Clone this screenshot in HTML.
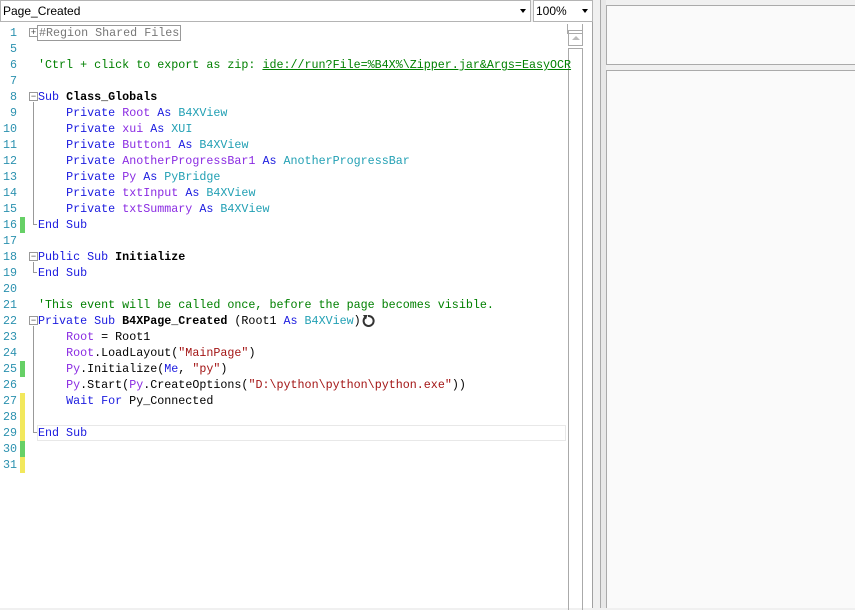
<!DOCTYPE html>
<html><head><meta charset="utf-8"><style>
*{margin:0;padding:0;box-sizing:border-box}
body{width:855px;height:608px;background:#f0f0f0;position:relative;overflow:hidden;font-family:"Liberation Sans",sans-serif}
.abs{position:absolute}
.combo{top:0;height:22px;background:#fff;border:1px solid #b4b4b4;font-size:12px;line-height:20px;padding-left:2px;color:#000}
.arrow{position:absolute;right:4px;top:8px;width:0;height:0;border-left:3px solid transparent;border-right:3px solid transparent;border-top:4px solid #000}
#ed{left:0;top:22px;width:593px;height:586px;background:#fff;border-right:1px solid #a0a0a0}
.row{position:absolute;left:0;height:16px;width:566px;font-family:"Liberation Mono",monospace;font-size:11.7px;line-height:16px;white-space:pre}
.ln{position:absolute;left:0;width:17px;text-align:right;color:#2b91af}
.code{position:absolute;left:38px}
.k{color:#1a1adf}.v{color:#8a2be2}.t{color:#22a0b4}.c{color:#008000}.s{color:#a31515}.b{font-weight:bold;color:#000}
.mk{position:absolute;left:20px;width:5px;height:16px}
.g{background:#66d066}.y{background:#f2e85c}
.fold{position:absolute;left:29px;top:3px;width:9px;height:9px;border:1px solid #999;background:#fff;font-size:9px;line-height:7px;text-align:center;color:#444;font-family:"Liberation Sans",sans-serif}
.vl{position:absolute;left:33px;width:1px;background:#999}
</style></head><body>
<div class="abs combo" style="left:0;width:531px">Page_Created<div class="arrow"></div></div>
<div class="abs combo" style="left:533px;width:60px">100%<div class="arrow"></div></div>
<div id="ed" class="abs">
 <div class="abs" style="left:567px;top:2px;width:16px;height:10px;border:1px solid #aaa;border-top:none"></div>
 <div class="abs" style="left:568px;top:8px;width:15px;height:16px;border:1px solid #aaa"><div style="position:absolute;left:3px;top:5px;border-left:4px solid transparent;border-right:4px solid transparent;border-bottom:4px solid #bbb"></div></div>
 <div class="abs" style="left:568px;top:26px;width:15px;height:562px;border:1px solid #aaa;border-bottom:none"></div>
</div>
<div class="abs" style="left:600px;top:0;width:6px;height:608px;background:#e8e8e8;border-left:1px solid #aaa"></div>
<div class="abs" style="left:606px;top:5px;width:249px;height:60px;background:#fafafa;border:1px solid #aaa;border-right:none"></div>
<div class="abs" style="left:606px;top:70px;width:249px;height:538px;background:#fafafa;border:1px solid #aaa;border-right:none;border-bottom:none"></div>

<div class="abs" style="left:0;top:25px;width:566px">
<div class="row" style="top:0"><span class="ln">1</span><div class="fold">+</div><span class="code" style="color:#777;border:1px solid #999;left:37px;padding:0 1px;line-height:14px">#Region Shared Files</span></div>
<div class="row" style="top:16px"><span class="ln">5</span></div>
<div class="row" style="top:32px"><span class="ln">6</span><span class="code c">'Ctrl + click to export as zip: <u>ide://run?File=%B4X%\Zipper.jar&amp;Args=EasyOCR</u></span></div>
<div class="row" style="top:48px"><span class="ln">7</span></div>
<div class="row" style="top:64px"><span class="ln">8</span><div class="fold">−</div><span class="code"><span class="k">Sub</span> <span class="b">Class_Globals</span></span></div>
<div class="row" style="top:80px"><span class="ln">9</span><span class="code">    <span class="k">Private</span> <span class="v">Root</span> <span class="k">As</span> <span class="t">B4XView</span></span></div>
<div class="row" style="top:96px"><span class="ln">10</span><span class="code">    <span class="k">Private</span> <span class="v">xui</span> <span class="k">As</span> <span class="t">XUI</span></span></div>
<div class="row" style="top:112px"><span class="ln">11</span><span class="code">    <span class="k">Private</span> <span class="v">Button1</span> <span class="k">As</span> <span class="t">B4XView</span></span></div>
<div class="row" style="top:128px"><span class="ln">12</span><span class="code">    <span class="k">Private</span> <span class="v">AnotherProgressBar1</span> <span class="k">As</span> <span class="t">AnotherProgressBar</span></span></div>
<div class="row" style="top:144px"><span class="ln">13</span><span class="code">    <span class="k">Private</span> <span class="v">Py</span> <span class="k">As</span> <span class="t">PyBridge</span></span></div>
<div class="row" style="top:160px"><span class="ln">14</span><span class="code">    <span class="k">Private</span> <span class="v">txtInput</span> <span class="k">As</span> <span class="t">B4XView</span></span></div>
<div class="row" style="top:176px"><span class="ln">15</span><span class="code">    <span class="k">Private</span> <span class="v">txtSummary</span> <span class="k">As</span> <span class="t">B4XView</span></span></div>
<div class="row" style="top:192px"><span class="ln">16</span><div class="mk g"></div><span class="code k">End Sub</span></div>
<div class="vl" style="top:77px;height:123px"></div><div class="abs" style="left:33px;top:199px;width:4px;height:1px;background:#999"></div>
<div class="row" style="top:208px"><span class="ln">17</span></div>
<div class="row" style="top:224px"><span class="ln">18</span><div class="fold">−</div><span class="code"><span class="k">Public Sub</span> <span class="b">Initialize</span></span></div>
<div class="row" style="top:240px"><span class="ln">19</span><span class="code k">End Sub</span></div>
<div class="vl" style="top:237px;height:11px"></div><div class="abs" style="left:33px;top:247px;width:4px;height:1px;background:#999"></div>
<div class="row" style="top:256px"><span class="ln">20</span></div>
<div class="row" style="top:272px"><span class="ln">21</span><span class="code c">'This event will be called once, before the page becomes visible.</span></div>
<div class="row" style="top:288px"><span class="ln">22</span><div class="fold">−</div><span class="code"><span class="k">Private Sub</span> <span class="b">B4XPage_Created</span> (Root1 <span class="k">As</span> <span class="t">B4XView</span>)</span>
<svg style="position:absolute;left:361px;top:1px" width="14" height="14" viewBox="0 0 14 14"><path d="M4 3.5 A5 5 0 1 0 7 2" fill="none" stroke="#333" stroke-width="2"/><path d="M2 1 L6.5 1 L5 5.5 Z" fill="#333"/></svg></div>
<div class="row" style="top:304px"><span class="ln">23</span><span class="code">    <span class="v">Root</span> = Root1</span></div>
<div class="row" style="top:320px"><span class="ln">24</span><span class="code">    <span class="v">Root</span>.LoadLayout(<span class="s">"MainPage"</span>)</span></div>
<div class="row" style="top:336px"><span class="ln">25</span><div class="mk g"></div><span class="code">    <span class="v">Py</span>.Initialize(<span class="k">Me</span>, <span class="s">"py"</span>)</span></div>
<div class="row" style="top:352px"><span class="ln">26</span><span class="code">    <span class="v">Py</span>.Start(<span class="v">Py</span>.CreateOptions(<span class="s">"D:\python\python\python.exe"</span>))</span></div>
<div class="row" style="top:368px"><span class="ln">27</span><div class="mk y"></div><span class="code">    <span class="k">Wait For</span> Py_Connected</span></div>
<div class="row" style="top:384px"><span class="ln">28</span><div class="mk y"></div></div>
<div class="row" style="top:400px"><span class="ln">29</span><div class="mk y"></div><div style="position:absolute;left:37px;top:0;width:529px;height:16px;border:1px solid #e8e8e8"></div><span class="code k">End Sub</span></div>
<div class="vl" style="top:301px;height:107px"></div><div class="abs" style="left:33px;top:407px;width:4px;height:1px;background:#999"></div>
<div class="row" style="top:416px"><span class="ln">30</span><div class="mk g"></div></div>
<div class="row" style="top:432px"><span class="ln">31</span><div class="mk y"></div></div>
</div>
</body></html>
